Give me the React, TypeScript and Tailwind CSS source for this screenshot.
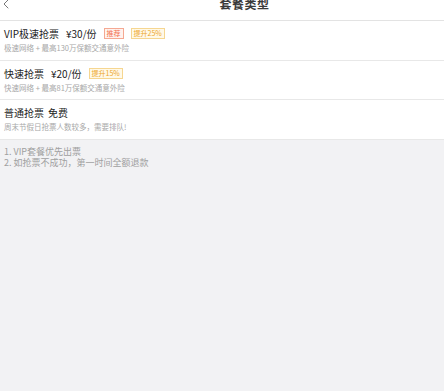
import { ChevronLeft } from 'lucide-react'

const plans = [
  {
    name: 'VIP极速抢票',
    price: '¥30/份',
    tags: [
      { text: '推荐', cls: 'border-[#f5a892] bg-[#fff3ee] text-[#f2704f]' },
      { text: '提升25%', cls: 'border-[#f6d690] bg-[#fff9e8] text-[#eda62a]' },
    ],
    desc: '极速网络 + 最高130万保额交通意外险',
  },
  {
    name: '快速抢票',
    price: '¥20/份',
    tags: [{ text: '提升15%', cls: 'border-[#f6d690] bg-[#fff9e8] text-[#eda62a]' }],
    desc: '快速网络 + 最高81万保额交通意外险',
  },
  {
    name: '普通抢票',
    price: '免费',
    tags: [],
    desc: '周末节假日抢票人数较多，需要排队!',
  },
]

export default function App() {
  return (
    <div className="min-h-[391px] bg-[#f2f2f4] font-['Noto_Sans_CJK_SC',sans-serif]">
      {/* header, top is cut off */}
      <div className="relative h-[21px] border-b border-[#e3e3e3] bg-white">
        <ChevronLeft className="absolute -top-[4px] left-[-2px] h-[16px] w-[16px] text-[#777]" strokeWidth={1.5} />
        <div className="absolute -top-[4px] left-0 right-0 pl-[45px] text-center text-[12px] font-bold leading-[16px] tracking-[0.5px] text-[#3a3a3a]">
          套餐类型
        </div>
      </div>

      <div className="bg-white">
        {plans.map((p, i) => (
          <div key={i} className="flex h-[39.5px] flex-col justify-center border-b border-[#e8e8e8] px-[4px]">
            <div className="flex items-center text-[10px] leading-[13px] text-[#222]">
              <span>{p.name}</span>
              <span className={p.tags.length ? 'ml-[7px]' : 'ml-[4px]'}>{p.price}</span>
              {p.tags.map((t, j) => (
                <span
                  key={j}
                  className={`ml-[7px] border px-[2px] text-[7px] leading-[9px] ${t.cls}`}
                >
                  {t.text}
                </span>
              ))}
            </div>
            <div className="mt-[3px] text-[7.5px] leading-[10px] text-[#a8a8a8]">{p.desc}</div>
          </div>
        ))}
      </div>

      <div className="px-[4px] pt-[6px] text-[9px] leading-[11px] text-[#a0a0a0]">
        <div>1. VIP套餐优先出票</div>
        <div>2. 如抢票不成功，第一时间全额退款</div>
      </div>
    </div>
  )
}
